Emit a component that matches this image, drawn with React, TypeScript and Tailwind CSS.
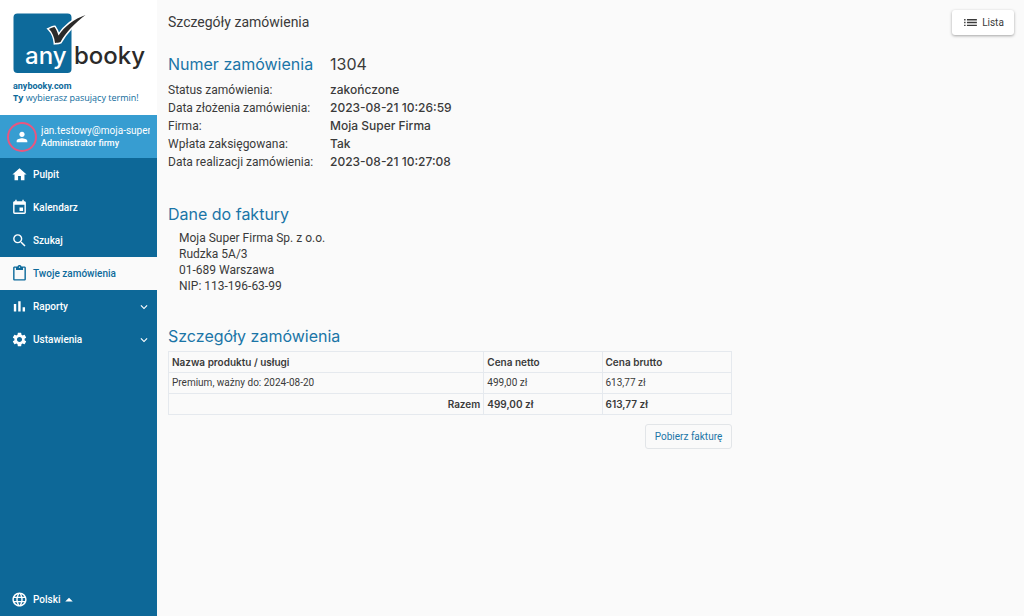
import { ReactNode, useState } from "react";
import {
  MdEvent,
  MdExpandMore,
  MdHome,
  MdLanguage,
  MdList,
  MdOutlineContentPaste,
  MdPerson,
  MdSearch,
  MdSettings,
  MdArrowDropUp,
} from "react-icons/md";

interface MenuItem {
  label: string;
  icon: ReactNode;
  expandable?: boolean;
}

interface OrderRow {
  name: string;
  net: string;
  gross: string;
}

const BarsIcon = () => (
  <svg viewBox="0 0 24 24" className="size-[17px]" fill="currentColor">
    <path d="M4 8.5h3.4V19H4V8.5zM10.2 4.5h3.4V19h-3.4V4.5zm6.2 8.5h3.4v6h-3.4v-6z" />
  </svg>
);

const menu: MenuItem[] = [
  { label: "Pulpit", icon: <MdHome className="size-[17px]" /> },
  { label: "Kalendarz", icon: <MdEvent className="size-[17px]" /> },
  { label: "Szukaj", icon: <MdSearch className="size-[17px]" /> },
  { label: "Twoje zamówienia", icon: <MdOutlineContentPaste className="size-[17px]" /> },
  { label: "Raporty", icon: <BarsIcon />, expandable: true },
  { label: "Ustawienia", icon: <MdSettings className="size-[17px]" />, expandable: true },
];

const details = [
  ["Status zamówienia:", "zakończone"],
  ["Data złożenia zamówienia:", "2023-08-21 10:26:59"],
  ["Firma:", "Moja Super Firma"],
  ["Wpłata zaksięgowana:", "Tak"],
  ["Data realizacji zamówienia:", "2023-08-21 10:27:08"],
];

const rows: OrderRow[] = [
  { name: "Premium, ważny do: 2024-08-20", net: "499,00 zł", gross: "613,77 zł" },
];

function Logo() {
  return (
    <svg viewBox="0 0 157 80" className="block h-20 w-full" role="img" aria-label="anybooky">
      <rect x="13.5" y="13.5" width="58" height="59.5" rx="4" fill="#0d6a9b" />
      <path
        d="M49 29c2-1 4-2 5.500-2 1.500 2 2.500 4 4 8.500C65 26 74 19 85.500 15 75 23 66 32 60.500 42c-2 .8-3.500.8-5.500 1-.5-6-3-11-6-14z"
        fill="#2b2a29"
        stroke="#fff"
        strokeWidth="3"
        paintOrder="stroke"
      />
      <text x="25" y="64" fontSize="24" fontWeight="500" fill="#fff" fontFamily="Inter, sans-serif">any</text>
      <text x="74" y="64" fontSize="24" fontWeight="500" fill="#2b2a29" fontFamily="Inter, sans-serif">booky</text>
    </svg>
  );
}

export default function App() {
  const [active, setActive] = useState("Twoje zamówienia");

  return (
    <div className="flex min-h-screen bg-[#fafafa] font-['Inter',sans-serif] text-[#3a3a3a]">
      <aside className="flex w-[157px] shrink-0 flex-col bg-[#0d6898] font-['Roboto',sans-serif] text-white">
        <div className="h-[115px] bg-white text-[#0d6a9b]">
          <Logo />
          <p className="pl-[13px] text-[9px] leading-3 font-bold">anybooky.com</p>
          <p className="pl-[13px] font-['Open_Sans',sans-serif] text-[9px] leading-3 whitespace-nowrap">
            <b>Ty</b> wybierasz pasujący termin!
          </p>
        </div>

        <div className="flex h-[43px] items-center gap-1 bg-[#379dd1] px-[7px]">
          <span className="flex size-[30px] shrink-0 items-center justify-center rounded-full border-2 border-[#e8567f]">
            <MdPerson className="size-4" />
          </span>
          <div className="min-w-0 overflow-hidden whitespace-nowrap">
            <p className="text-[10px] leading-[13px]">jan.testowy@moja-super</p>
            <p className="text-[9px] leading-[13px] font-medium">Administrator firmy</p>
          </div>
        </div>

        <nav className="flex flex-col">
          {menu.map((item) => (
            <button
              key={item.label}
              type="button"
              onClick={() => setActive(item.label)}
              className={
                item.label === active
                  ? "flex h-[33px] items-center gap-[5px] bg-[#fafafa] pr-[6px] pl-[11px] text-[10px] font-medium text-[#0d6a9b]"
                  : "flex h-[33px] items-center gap-[5px] pr-[6px] pl-[11px] text-[10px] font-medium"
              }
            >
              {item.icon}
              <span>{item.label}</span>
              {item.expandable && <MdExpandMore className="ml-auto size-[14px]" />}
            </button>
          ))}
        </nav>

        <button type="button" className="mt-auto flex h-[33px] items-center gap-[5px] pl-[11px] text-[10px] font-medium">
          <MdLanguage className="size-[17px]" />
          <span className="flex items-center">
            Polski <MdArrowDropUp className="size-[18px]" />
          </span>
        </button>
      </aside>

      <main className="min-w-0 flex-1 pr-[10px] pl-[11px]">
        <header className="flex h-11 items-center justify-between">
          <h1 className="font-['Roboto',sans-serif] text-sm">Szczegóły zamówienia</h1>
          <button
            type="button"
            className="flex h-[25px] w-[62px] items-center justify-center gap-[3px] rounded-[3px] bg-white font-['Roboto',sans-serif] text-[10px] shadow-[0_1px_3px_rgba(0,0,0,0.35)]"
          >
            <MdList className="size-[17px]" />
            Lista
          </button>
        </header>

        <section className="pt-[6px]">
          <dl className="grid grid-cols-[162px_1fr] text-xs leading-[18px]">
            <dt className="mb-[3px] text-base leading-7 text-[#1a75a7]">Numer zamówienia</dt>
            <dd className="mb-[3px] text-base leading-7">1304</dd>
            {details.map(([label, value]) => (
              <div key={label} className="contents">
                <dt className="font-['Roboto',sans-serif]">{label}</dt>
                <dd className="font-medium">{value}</dd>
              </div>
            ))}
          </dl>
        </section>

        <section className="pt-[29px]">
          <h2 className="text-base leading-7 text-[#1a75a7]">Dane do faktury</h2>
          <address className="pt-[2px] pl-[11px] font-['Roboto',sans-serif] text-xs leading-4 not-italic">
            Moja Super Firma Sp. z o.o.
            <br />
            Rudzka 5A/3
            <br />
            01-689 Warszawa
            <br />
            NIP: 113-196-63-99
          </address>
        </section>

        <section className="max-w-[564px] pt-7">
          <h2 className="text-base leading-7 text-[#1a75a7]">Szczegóły zamówienia</h2>
          <table className="mt-px w-full table-fixed border-collapse text-left text-[10px] leading-[14px] [&_td]:border [&_td]:border-[#e5e9ee] [&_td]:px-[3px] [&_td]:py-[3px] [&_td]:font-['Roboto',sans-serif] [&_th]:border [&_th]:border-[#e5e9ee] [&_th]:px-[3px] [&_th]:py-[3px] [&_th]:font-semibold">
            <colgroup>
              <col className="w-[56%]" />
              <col className="w-[21%]" />
              <col className="w-[23%]" />
            </colgroup>
            <thead>
              <tr>
                <th>Nazwa produktu / usługi</th>
                <th>Cena netto</th>
                <th>Cena brutto</th>
              </tr>
            </thead>
            <tbody>
              {rows.map((row) => (
                <tr key={row.name}>
                  <td>{row.name}</td>
                  <td>{row.net}</td>
                  <td>{row.gross}</td>
                </tr>
              ))}
            </tbody>
            <tfoot>
              <tr>
                <th className="text-right">Razem</th>
                <th>499,00 zł</th>
                <th>613,77 zł</th>
              </tr>
            </tfoot>
          </table>
          <div className="flex justify-end pt-[9px]">
            <button
              type="button"
              className="h-[25px] w-[87px] rounded-[3px] border border-[#e2e5e8] font-['Roboto',sans-serif] text-[10px] text-[#1a75a7]"
            >
              Pobierz fakturę
            </button>
          </div>
        </section>
      </main>
    </div>
  );
}
